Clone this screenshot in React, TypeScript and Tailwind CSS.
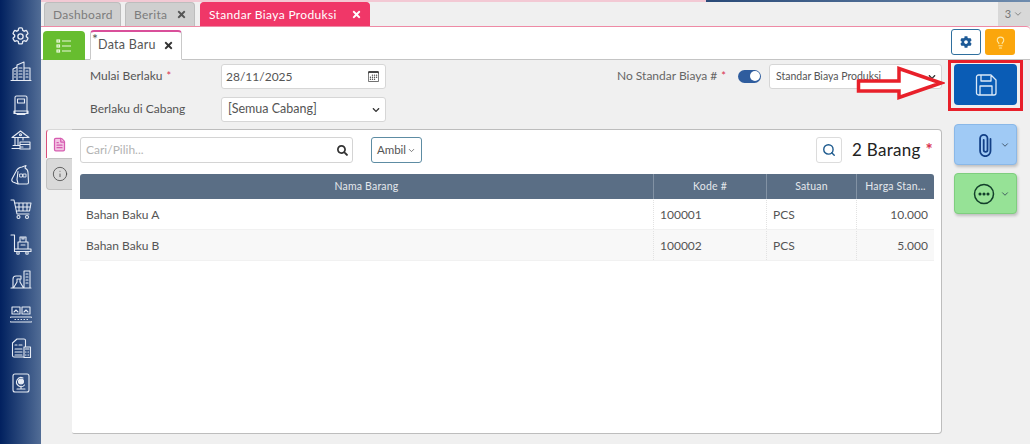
import React from "react";
import { Search, ChevronDown, Lightbulb, Info, FileText } from "lucide-react";
import { FaCog, FaTimes, FaSearch, FaChevronDown } from "react-icons/fa";
import { BsCalendar3 } from "react-icons/bs";

const S = { fill: "none", stroke: "currentColor", strokeWidth: 1.1, strokeLinecap: "round", strokeLinejoin: "round" } as const;

function Ic({ children }: { children: React.ReactNode }) {
  return <svg width="22" height="22" viewBox="0 0 22 22" {...S} className="text-[#e6ebf4]">{children}</svg>;
}

const sideIcons = [
  <svg key="0" width="21" height="21" viewBox="0 0 24 24" fill="none" stroke="#e6ebf4" strokeWidth="1.5"><path d="M9.7 3.3a1.2 1.2 0 0 1 1.2-1.1h2.2a1.2 1.2 0 0 1 1.2 1.1l.2 1.6 1.7 1 1.5-.6a1.2 1.2 0 0 1 1.5.5l1.1 1.9a1.2 1.2 0 0 1-.3 1.6l-1.3 1v2l1.3 1a1.2 1.2 0 0 1 .3 1.6l-1.1 1.9a1.2 1.2 0 0 1-1.5.5l-1.5-.6-1.7 1-.2 1.6a1.2 1.2 0 0 1-1.2 1.1h-2.2a1.2 1.2 0 0 1-1.2-1.1l-.2-1.6-1.7-1-1.5.6a1.2 1.2 0 0 1-1.5-.5l-1.1-1.9a1.2 1.2 0 0 1 .3-1.6l1.3-1v-2l-1.3-1a1.2 1.2 0 0 1-.3-1.6l1.1-1.9a1.2 1.2 0 0 1 1.5-.5l1.5.6 1.7-1z"/><circle cx="12" cy="12" r="3"/></svg>,
  <Ic key="1"><path d="M1 20.500h20M3 20V9l4-2M7 20V5l7-3v18M14 8h6v12M4.500 11h1M4.500 14h1M4.500 17h1M9 8h3M9 11h3M9 14h3M9 17h3M16 11h2M16 14h2M16 17h2"/></Ic>,
  <Ic key="2"><path d="M5 19V3.500A1.500 1.500 0 0 1 6.500 2h9A1.500 1.500 0 0 1 17 3.500V19M4 17h14v2.500H4zM7.500 5h7v4h-7zM7 20.500h8"/></Ic>,
  <Ic key="3"><path d="M2 8.500 10.500 2 19 8.500zM4 8.500h13M5 9v7M8 9v7M13 9v2M2 19.500h8M3 16.500h7M10 13h10v7H10zM10 15.500h10M10 18h3"/><circle cx="10.500" cy="5.800" r="1"/></Ic>,
  <Ic key="4"><path d="M6 7.500c1-2.500 3-4 6-4.500l4-1.500-1 2.500c2 1 3 2.500 3 4.500l.500 10a1.500 1.500 0 0 1-1.500 1.500H8L3 18c-1-.500-1.500-1.500-1-3zM8 19.500l-1-4 1-8"/><path d="M10 10h2.500v3H10zM13.500 10H16v3h-2.500z" strokeWidth="0.900"/></Ic>,
  <Ic key="5"><path d="M1 2h3l3 14h12M4.500 5H21l-1.500 8H6.200M9 5v8M13 5v8M17 5v8M5.500 9h15"/><circle cx="8.500" cy="19" r="1.500"/><circle cx="17" cy="19" r="1.500"/></Ic>,
  <Ic key="6"><path d="M1 2h3.500v14M4.500 16H21v2.500H4.500zM8 16V9h10v7M10 9V4h6v5M12 4v2h2V4M11 12h4"/><circle cx="8" cy="20" r="1.300"/><circle cx="17" cy="20" r="1.300"/></Ic>,
  <Ic key="7"><path d="M1 20h20M3 20v-9c0-2 1-3 3-3h5v3M14 20V3h6v17M16 6h2M16 9h2M16 12h2M16 15h2M4 19l3-5v-3h3v3l3 5c.300.500 0 1-.500 1h-8c-.500 0-.800-.500-.500-1z"/></Ic>,
  <Ic key="8"><path d="M2 4h8v7H2zM12 4h8v7h-8zM4 9l2-2 2 2M14 9l2-2 2 2M1.500 14h19a1.500 1.500 0 0 1 0 5h-19a1.500 1.500 0 0 1 0-5zM5 16.500h.5M8 16.500h.5M11 16.500h.5M14 16.500h.5M17 16.500h.5"/></Ic>,
  <Ic key="9"><path d="M13 20H4a1.500 1.500 0 0 1-1.500-1.500V6L7 2h7a1.500 1.500 0 0 1 1.500 1.500V9M5 8h2M9 8h3M5 12h7M5 15h7M5 18h7M14 10h6.500v10.500H14zM15.500 12h3.500M15.500 15h.5M18 15h.5M15.500 18h.5M18 18h.5"/></Ic>,
  <Ic key="10"><path d="M5 2h12a2 2 0 0 1 2 2v14a2 2 0 0 1-2 2H5a2 2 0 0 1-2-2V4a2 2 0 0 1 2-2zM7 17h8M11 14v3"/><path d="M13 6a4.500 4.500 0 1 0 1.500 7" /><circle cx="11" cy="9.500" r="2.500" fill="#e6ebf4"/></Ic>,
];

function PageTab({ label, active, close }: { label: string; active?: boolean; close?: boolean }) {
  return (
    <div className={`h-[24px] flex items-center justify-between whitespace-nowrap rounded-t-[4px] border border-b-0 text-[12px] ${active ? "w-[170px] tracking-[0.35px] bg-[#f03768] border-[#f03768] text-white pl-[8px] pr-[7px]" : "tracking-[0.3px] bg-[#cfcfcf] border-[#bdbdbd] text-[#7c7c7c] pl-[8px] pr-[7px]"} ${label === "Dashboard" ? "w-[77px]" : ""} ${label === "Berita" ? "w-[70px]" : ""}`}>
      <span>{label}</span>
      {close && <FaTimes size={11} className={active ? "text-white" : "text-[#555]"} />}
    </div>
  );
}

const Req = () => <span className="text-[#d9304f] text-[11px] ml-[4px]">*</span>;

function Cell({ w, right, children }: { w: string; right?: boolean; children: React.ReactNode }) {
  return <div className={`${w} h-full flex items-center px-[6px] border-r border-dotted border-[#e2e2e2] last:border-r-0 ${right ? "justify-end" : ""}`}>{children}</div>;
}

function Row({ a, b, c, d, alt }: { a: string; b: string; c: string; d: string; alt?: boolean }) {
  return (
    <div className={`h-[31px] flex text-[12px] text-[#555] border-b border-[#f1f1f1] pt-px ${alt ? "bg-[#f8f8f8]" : "bg-white"}`}>
      <Cell w="w-[574px]">{a}</Cell>
      <Cell w="w-[113px]">{b}</Cell>
      <Cell w="w-[90px]">{c}</Cell>
      <Cell w="w-[77px]" right>{d}</Cell>
    </div>
  );
}

function Head({ w, children }: { w: string; children: React.ReactNode }) {
  return <div className={`${w} h-full flex items-center justify-center whitespace-nowrap border-r border-[#8292a4] last:border-r-0 tracking-[0.2px]`}>{children}</div>;
}

export default function App() {
  return (
    <div className="w-[1030px] h-[444px] flex overflow-hidden bg-[#f0f0f0] text-[#555] relative" style={{ fontFamily: 'Lato, "Open Sans", sans-serif' }}>
      <aside className="w-[41px] h-full shrink-0 bg-gradient-to-r from-[#02205f] to-[#526d96] flex flex-col items-center pt-[26px] gap-[12.700px]">
        {sideIcons}
      </aside>

      <div className="flex-1 min-w-0 flex flex-col">
        <div className="h-[2px] bg-[#f3c9d4] flex justify-end">
          <div className="w-[324px] h-full bg-gradient-to-r from-[#2a4a78] to-[#6f8cae]" />
        </div>

        <div className="h-[24px] flex pl-[3px] gap-[4px] relative">
          <PageTab label="Dashboard" />
          <PageTab label="Berita" close />
          <div className="ml-[1px]"><PageTab label="Standar Biaya Produksi" active close /></div>
          <div className="ml-auto w-[32px] h-full bg-[#d8d8d8] flex items-center justify-center gap-[2px] text-[11px] text-[#777]">
            3 <ChevronDown size={10} />
          </div>
        </div>

        <div className="h-[34px] bg-white border-t border-[#ee8aa5] border-b border-b-[#c4c4c4] flex items-end pl-[2px] pr-[15px] rounded-tr-[4px]">
          <div className="w-[42px] h-[29px] bg-[#67bd2f] rounded-t-[4px] flex items-center justify-center -mb-px">
            <svg width="16" height="14" viewBox="0 0 16 14" fill="none" stroke="#e9f7dc" strokeWidth="1.200"><rect x="1" y="1" width="2.500" height="2" /><rect x="1" y="6" width="2.500" height="2" /><rect x="1" y="11" width="2.500" height="2" /><path d="M6 2h9M6 7h9M6 12h9" /></svg>
          </div>
          <div className="ml-[5px] w-[92px] h-[30px] bg-white border border-[#c9c9c9] border-t-2 border-t-[#d94f9a] border-b-white rounded-t-[4px] -mb-px relative flex items-center pl-[7px] gap-[7px] text-[12.500px] tracking-[0.3px] text-[#555] whitespace-nowrap">
            <span className="absolute left-[1px] top-[-1px] text-[14px] leading-[16px]">*</span>
            <span>Data Baru</span>
            <FaTimes size={11} className="text-[#333]" />
          </div>
          <div className="ml-auto flex gap-[4px] self-start mt-[2px]">
            <div className="w-[30px] h-[26px] bg-white border border-[#2f6f9e] rounded-[3px] flex items-center justify-center">
              <FaCog size={12} className="text-[#1d5a96]" />
            </div>
            <div className="w-[30px] h-[26px] bg-[#fba60c] rounded-[3px] flex items-center justify-center">
              <Lightbulb size={13} className="text-[#fde9a8]" />
            </div>
          </div>
        </div>

        <div className="flex-1 flex min-h-0">
          <div className="w-[901px] shrink-0 flex flex-col">
            <div className="h-[69px] pt-[4px] flex text-[12px] whitespace-nowrap">
              <div className="w-[49px] shrink-0" />
              <div className="w-[131px] shrink-0 flex flex-col text-[#555]">
                <div className="h-[24px] flex items-center">Mulai Berlaku<Req /></div>
                <div className="h-[25px] mt-[8px] flex items-center">Berlaku di Cabang</div>
              </div>
              <div className="w-[165px] shrink-0 flex flex-col">
                <div className="h-[25px] bg-white border border-[#d6d6d6] rounded-[3px] flex items-center justify-between pl-[4px] pr-[6px]">
                  <span>28/11/2025</span>
                  <BsCalendar3 size={11} className="text-[#444]" />
                </div>
                <div className="h-[25px] mt-[8px] bg-white border border-[#d6d6d6] rounded-[3px] flex items-center justify-between pl-[6px] pr-[5px] text-[12.500px]">
                  <span>[Semua Cabang]</span>
                  <FaChevronDown size={8} className="text-[#333]" />
                </div>
              </div>
              <div className="ml-auto h-[24px] flex items-center text-[#666]">No Standar Biaya #<Req /></div>
              <div className="ml-[12px] h-[24px] flex items-center shrink-0">
                <div className="w-[23px] h-[13px] rounded-full bg-[#2f5d9e] flex items-center justify-end pr-[1px]"><div className="w-[10px] h-[10px] rounded-full bg-white" /></div>
              </div>
              <div className="ml-[8px] w-[173px] shrink-0 h-[25px] bg-white border border-[#d6d6d6] rounded-[3px] flex items-center justify-between pl-[6px] pr-[5px] text-[10.500px]">
                <span>Standar Biaya Produksi</span>
                <FaChevronDown size={8} className="text-[#333]" />
              </div>
            </div>

            <div className="flex-1 flex pl-[5px] pb-[10px]">
              <div className="w-[26px] shrink-0 flex flex-col">
                <div className="h-[29px] bg-white border-l border-l-[#d94f7a] border-t border-t-[#d9d9d9] rounded-tl-[4px] flex items-center justify-center">
                  <FileText size={15} strokeWidth={2} fill="#f3c6e4" className="text-[#d65cb0]" />
                </div>
                <div className="h-[32px] bg-[#d9d9d9] border border-[#c2c2c2] border-r-0 rounded-l-[4px] flex items-center justify-center">
                  <Info size={16} strokeWidth={1.200} className="text-[#444]" />
                </div>
              </div>
              <div className="flex-1 bg-white border border-[#bdbdbd] border-l-0 rounded-r-[4px] rounded-bl-[2px] pl-[8px] pr-[7px] pt-[7px]">
                <div className="h-[26px] flex items-center">
                  <div className="w-[273px] h-full border border-[#d4d4d4] rounded-[3px] flex items-center justify-between pl-[5px] pr-[4px] text-[12px] text-[#b3b3b3]">
                    <span>Cari/Pilih...</span>
                    <FaSearch size={11} className="text-[#333]" />
                  </div>
                  <div className="ml-[18px] w-[51px] h-full border border-[#5d8ca3] rounded-[3px] flex items-center justify-center gap-[1px] text-[11.500px] text-[#555]">
                    Ambil<ChevronDown size={9} />
                  </div>
                  <div className="ml-[394px] w-[26px] h-full border border-[#dcdcdc] rounded-[3px] flex items-center justify-center">
                    <Search size={14} strokeWidth={2.400} className="text-[#1d5a8e]" />
                  </div>
                  <div className="ml-[10px] text-[17px] text-[#222] whitespace-nowrap tracking-[0.3px]">2 Barang <span className="text-[#d9304f] font-bold">*</span></div>
                </div>
                <div className="mt-[11px] w-[854px]">
                  <div className="h-[25px] bg-[#5a6e85] rounded-t-[3px] flex text-[10.500px] text-[#e4e8ec]">
                    <Head w="w-[574px]">Nama Barang</Head>
                    <Head w="w-[113px]">Kode #</Head>
                    <Head w="w-[90px]">Satuan</Head>
                    <Head w="w-[77px]">Harga Stan...</Head>
                  </div>
                  <Row a="Bahan Baku A" b="100001" c="PCS" d="10.000" />
                  <Row a="Bahan Baku B" b="100002" c="PCS" d="5.000" alt />
                </div>
              </div>
            </div>
          </div>

          <div className="flex-1 flex flex-col pl-[12px] pt-[4px]">
            <div className="w-[63px] h-[41px] bg-[#0a5cb5] rounded-[4px] flex items-center justify-center">
              <svg width="24" height="24" viewBox="0 0 24 24" fill="none" stroke="#dbe9f8" strokeWidth="1.300" strokeLinejoin="round"><path d="M4.500 2h12.500l5 5v13a2 2 0 0 1-2 2H4.500a2 2 0 0 1-2-2V4a2 2 0 0 1 2-2zM7 2v6h10V3M6 22v-9h12v9" /></svg>
            </div>
            <div className="mt-[19px] w-[63px] h-[41px] bg-[#a0caf5] border border-[#8ab8e8] rounded-[4px] shadow-[1px_2px_3px_rgba(0,0,0,0.2)] flex items-center justify-end pr-[6px] gap-[7px]">
              <svg width="15" height="24" viewBox="0 0 15 24" fill="none" stroke="#123f86" strokeWidth="1.800" strokeLinecap="round"><path d="M12.500 6v12a5.200 5.200 0 0 1-10.400 0V5.500a3.700 3.700 0 0 1 7.400 0V17a1.900 1.900 0 0 1-3.800 0V7" /></svg>
              <ChevronDown size={10} className="text-[#345]" />
            </div>
            <div className="mt-[8px] w-[63px] h-[41px] bg-[#96e296] border border-[#7fce7f] rounded-[4px] shadow-[1px_2px_3px_rgba(0,0,0,0.2)] flex items-center justify-end pr-[6px] gap-[5px]">
              <svg width="22" height="22" viewBox="0 0 22 22" fill="none" stroke="#123f2a" strokeWidth="1.500"><circle cx="11" cy="11" r="9.500" /><circle cx="7" cy="11" r="0.800" fill="#123f2a" /><circle cx="11" cy="11" r="0.800" fill="#123f2a" /><circle cx="15" cy="11" r="0.800" fill="#123f2a" /></svg>
              <ChevronDown size={10} className="text-[#345]" />
            </div>
          </div>
        </div>
      </div>

      <div className="absolute left-[948px] top-[60px] w-[75px] h-[51px] border-[3px] border-[#e8202a]" />
      <svg className="absolute left-[855px] top-[64px]" width="90" height="38" viewBox="0 0 90 38" fill="#ffffff">
        <path d="M3.500 17H44V4.500L86 19 44 33.500V27H3.500z" stroke="#e8202a" strokeWidth="3.500" />
      </svg>
    </div>
  );
}
